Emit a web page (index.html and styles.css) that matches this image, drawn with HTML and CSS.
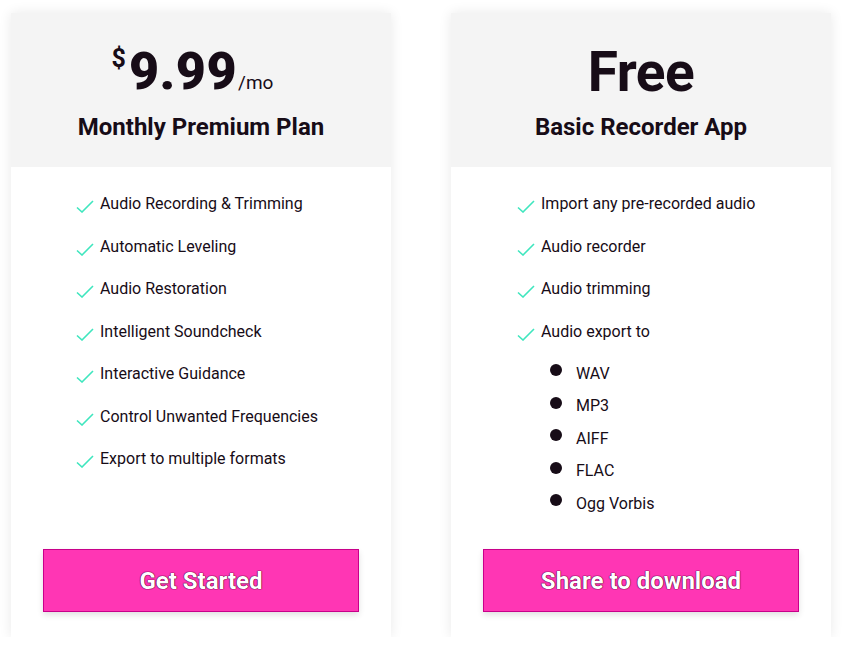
FILE: index.html
```html
<!DOCTYPE html>
<html>
<head>
<meta charset="utf-8">
<link rel="stylesheet" href="styles.css">
</head>
<body>
<div class="plans">
  <div class="card">
    <div class="head">
      <div class="price shifted"><span class="cur">$</span><span class="amt">9.99</span><span class="per">/mo</span></div>
      <div class="name">Monthly Premium Plan</div>
    </div>
    <div class="body">
      <ul class="features left">
        <li><svg class="chk" viewBox="0 0 18 14"><path d="M1 8.5 L6 13 L17 2"/></svg>Audio Recording &amp; Trimming</li>
        <li><svg class="chk" viewBox="0 0 18 14"><path d="M1 8.5 L6 13 L17 2"/></svg>Automatic Leveling</li>
        <li><svg class="chk" viewBox="0 0 18 14"><path d="M1 8.5 L6 13 L17 2"/></svg>Audio Restoration</li>
        <li><svg class="chk" viewBox="0 0 18 14"><path d="M1 8.5 L6 13 L17 2"/></svg>Intelligent Soundcheck</li>
        <li><svg class="chk" viewBox="0 0 18 14"><path d="M1 8.5 L6 13 L17 2"/></svg>Interactive Guidance</li>
        <li><svg class="chk" viewBox="0 0 18 14"><path d="M1 8.5 L6 13 L17 2"/></svg>Control Unwanted Frequencies</li>
        <li><svg class="chk" viewBox="0 0 18 14"><path d="M1 8.5 L6 13 L17 2"/></svg>Export to multiple formats</li>
      </ul>
      <a class="btn">Get Started</a>
    </div>
  </div>
  <div class="card">
    <div class="head">
      <div class="price"><span class="free">Free</span></div>
      <div class="name">Basic Recorder App</div>
    </div>
    <div class="body">
      <ul class="features right">
        <li><svg class="chk" viewBox="0 0 18 14"><path d="M1 8.5 L6 13 L17 2"/></svg>Import any pre-recorded audio</li>
        <li><svg class="chk" viewBox="0 0 18 14"><path d="M1 8.5 L6 13 L17 2"/></svg>Audio recorder</li>
        <li><svg class="chk" viewBox="0 0 18 14"><path d="M1 8.5 L6 13 L17 2"/></svg>Audio trimming</li>
        <li><svg class="chk" viewBox="0 0 18 14"><path d="M1 8.5 L6 13 L17 2"/></svg>Audio export to</li>
      </ul>
      <ul class="formats">
        <li>WAV</li>
        <li>MP3</li>
        <li>AIFF</li>
        <li>FLAC</li>
        <li>Ogg Vorbis</li>
      </ul>
      <a class="btn">Share to download</a>
    </div>
  </div>
</div>
</body>
</html>
```
FILE: styles.css
```css
html, body {
  margin: 0;
  padding: 0;
  background: #fff;
  font-family: Roboto, "Liberation Sans", sans-serif;
  color: #170c17;
}
.plans {
  display: flex;
  gap: 60px;
  padding: 13px 0 0 11px;
}
.card {
  width: 380px;
  height: 624px;
  background: #fff;
  box-shadow: 0 0 12px rgba(0,0,0,0.09);
  display: flex;
  flex-direction: column;
}
.head {
  height: 154px;
  background: #f4f4f4;
  text-align: center;
  box-sizing: border-box;
  padding-top: 27px;
}
.price {
  height: 64px;
  display: flex;
  justify-content: center;
  align-items: baseline;
  line-height: 64px;
}
.price.shifted {
  padding-right: 17px;
}
.cur {
  font-size: 25px;
  font-weight: 700;
  align-self: flex-start;
  line-height: 38px;
  margin-right: 3px;
}
.amt {
  font-size: 52px;
  font-weight: 900;
  letter-spacing: 0.5px;
}
.per {
  font-size: 19px;
  font-weight: 400;
  margin-left: 1px;
}
.free {
  font-size: 55px;
  font-weight: 700;
  letter-spacing: -0.5px;
}
.name {
  font-size: 24px;
  font-weight: 700;
  margin-top: 9px;
  line-height: 28px;
}
.body {
  flex: 1;
  display: flex;
  flex-direction: column;
  padding: 24px 32px 24px 32px;
}
.features {
  list-style: none;
  margin: 0;
  padding: 0;
}
.features.left { padding-left: 33px; }
.features.right { padding-left: 34px; }
.features li {
  display: flex;
  align-items: center;
  height: 42.5px;
  font-size: 16px;
  line-height: 20px;
  position: relative;
  padding-left: 24px;
}
.features li:first-child { margin-top: -8px; }
.chk {
  position: absolute;
  left: 0;
  top: 16px;
  width: 18px;
  height: 14px;
  fill: none;
  stroke: #3fe6be;
  stroke-width: 1.6;
}
.formats {
  list-style: none;
  margin: 0;
  padding: 0 0 0 61px;
}
.formats li {
  height: 32.5px;
  display: flex;
  align-items: center;
  font-size: 16px;
  position: relative;
  padding-left: 32px;
}
.formats li:first-child { margin-top: 4px; }
.formats li::before {
  content: "";
  position: absolute;
  left: 6px;
  top: 7px;
  width: 12px;
  height: 12px;
  border-radius: 50%;
  background: #170c17;
}
.btn {
  margin-top: auto;
  height: 63px;
  box-sizing: border-box;
  background: #ff36b4;
  border: 1px solid #c8008a;
  color: #fff;
  font-size: 24px;
  font-weight: 700;
  display: flex;
  align-items: center;
  justify-content: center;
  box-shadow: 0 3px 6px rgba(0,0,0,0.12);
  text-shadow: 0 0 1px #5a0038, 0 0 1px #5a0038, 0 0 1px #5a0038;
  cursor: pointer;
  margin-bottom: 1px;
}
```
